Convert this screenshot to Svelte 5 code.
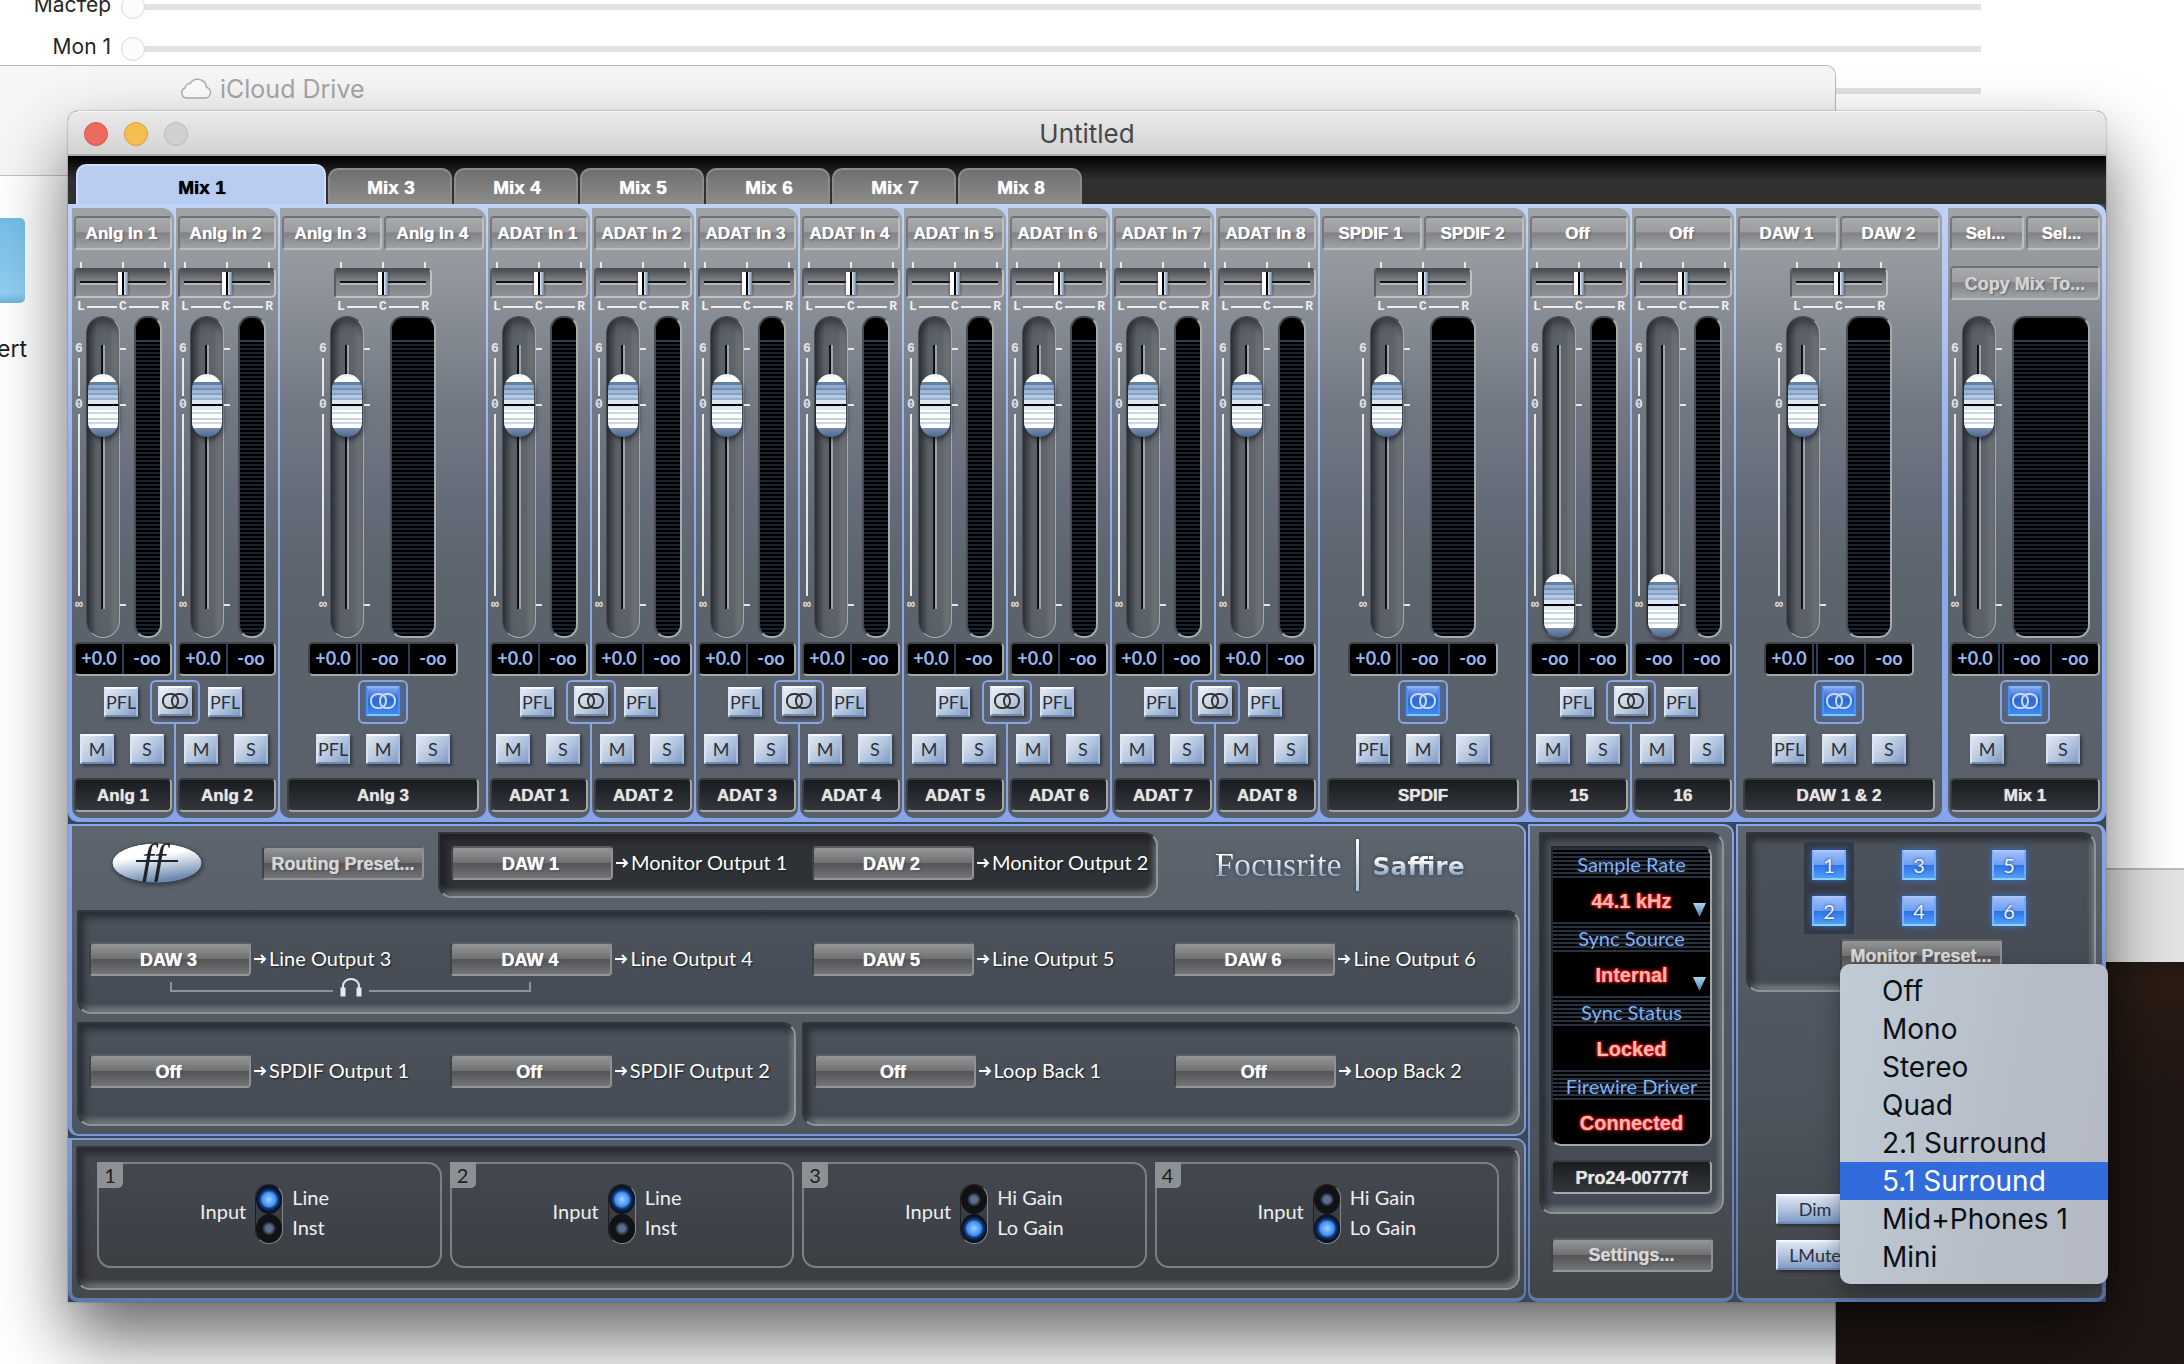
<script>
  const tabs = ["Mix 1", "Mix 3", "Mix 4", "Mix 5", "Mix 6", "Mix 7", "Mix 8"];

  // `link` marks the left strip of a linkable pair, `wide` a linked stereo strip
  const strips = [
    { inputs: ["Anlg In 1"], name: "Anlg 1", link: true },
    { inputs: ["Anlg In 2"], name: "Anlg 2" },
    { inputs: ["Anlg In 3", "Anlg In 4"], name: "Anlg 3", wide: true },
    { inputs: ["ADAT In 1"], name: "ADAT 1", link: true },
    { inputs: ["ADAT In 2"], name: "ADAT 2" },
    { inputs: ["ADAT In 3"], name: "ADAT 3", link: true },
    { inputs: ["ADAT In 4"], name: "ADAT 4" },
    { inputs: ["ADAT In 5"], name: "ADAT 5", link: true },
    { inputs: ["ADAT In 6"], name: "ADAT 6" },
    { inputs: ["ADAT In 7"], name: "ADAT 7", link: true },
    { inputs: ["ADAT In 8"], name: "ADAT 8" },
    { inputs: ["SPDIF 1", "SPDIF 2"], name: "SPDIF", wide: true },
    { inputs: ["Off"], name: "15", link: true, down: true },
    { inputs: ["Off"], name: "16", down: true },
    { inputs: ["DAW 1", "DAW 2"], name: "DAW 1 & 2", wide: true },
    { inputs: ["Sel...", "Sel..."], name: "Mix 1", wide: true, master: true },
  ];

  const monitorRoutes = [["DAW 1", "Monitor Output 1"], ["DAW 2", "Monitor Output 2"]];
  const lineRoutes = [
    ["DAW 3", "Line Output 3"],
    ["DAW 4", "Line Output 4"],
    ["DAW 5", "Line Output 5"],
    ["DAW 6", "Line Output 6"],
  ];
  const spdifRoutes = [["Off", "SPDIF Output 1"], ["Off", "SPDIF Output 2"]];
  const loopRoutes = [["Off", "Loop Back 1"], ["Off", "Loop Back 2"]];

  const inputs = [
    { options: ["Line", "Inst"], value: "Line" },
    { options: ["Line", "Inst"], value: "Line" },
    { options: ["Hi Gain", "Lo Gain"], value: "Lo Gain" },
    { options: ["Hi Gain", "Lo Gain"], value: "Lo Gain" },
  ];

  const monitorPairs = [[1, 2], [3, 4], [5, 6]];
  const presets = ["Off", "Mono", "Stereo", "Quad", "2.1 Surround", "5.1 Surround", "Mid+Phones 1", "Mini"];

  let activeTab = $state("Mix 1");
  let highlighted = $state("5.1 Surround");
</script>

{#snippet linkButton(on)}
  <span class="link-frame">
    <button class="key link-key" class:lit={on} aria-label="Stereo link" aria-pressed={on}>
      <svg width="28" height="18" viewBox="0 0 28 18" fill="none" stroke="currentColor" stroke-width="2">
        <rect x="2" y="2" width="15" height="14" rx="6.500" />
        <rect x="11" y="2" width="15" height="14" rx="6.500" />
      </svg>
    </button>
  </span>
{/snippet}

{#snippet route(source, target)}
  <div class="route">
    <button class="metal dark">{source}</button>
    <svg width="13" height="12" viewBox="0 0 13 12" fill="none" stroke="#fff" stroke-width="2">
      <path d="M0 6h11M7 2l4 4-4 4" />
    </svg>
    <span>{target}</span>
  </div>
{/snippet}

<div class="desktop">
  <section class="back-window">
    {#each ["Мастер", "Mon 1", "Mon 2"] as label, i}
      <div class="volume-row">
        <label for="volume-{i}">{label}</label>
        <input id="volume-{i}" type="range" min="0" max="100" value="0" />
      </div>
    {/each}
    <div class="back-footer"></div>
  </section>

  <section class="finder">
    <header>
      <svg width="32" height="24" viewBox="0 0 32 24" fill="#fdfdfd" stroke="#b0b0b0" stroke-width="1.5">
        <path d="M7 22h18a5.500 5.500 0 0 0 1.500-10.800A9 9 0 0 0 10 7.500 5 5 0 0 0 5 12 5.200 5.200 0 0 0 7 22z" />
      </svg>
      <span>iCloud Drive</span>
    </header>
    <div class="folder"></div>
    <p>ert</p>
  </section>

  <main class="window">
    <header class="titlebar">
      <div class="lights">
        <button class="close" aria-label="Close"></button>
        <button class="minimise" aria-label="Minimise"></button>
        <button class="zoom" aria-label="Zoom"></button>
      </div>
      <h1>Untitled</h1>
    </header>

    <nav class="tabs">
      {#each tabs as tab}
        <button class:active={tab === activeTab} onclick={() => (activeTab = tab)}>{tab}</button>
      {/each}
    </nav>

    <section class="mixer">
      {#each strips as strip}
        <article class="strip" class:wide={strip.wide} class:master={strip.master}>
          <div class="inputs">
            {#each strip.inputs as input}
              <button class="metal">{input}</button>
            {/each}
          </div>

          <div class="pan-area">
            {#if strip.master}
              <button class="metal copy">Copy Mix To...</button>
            {:else}
              <div class="pan-ticks"><i></i><i></i><i></i></div>
              <input class="pan" type="range" min="-50" max="50" value="0" aria-label="{strip.name} pan" />
              <div class="pan-scale"><b>L</b><i></i><b>C</b><i></i><b>R</b></div>
            {/if}
          </div>

          <div class="level">
            <div class="scale">
              <b>6</b><i class="short"></i><b>0</b><i class="long"></i><b>∞</b>
            </div>
            <input
              class="fader"
              type="range"
              min="0"
              max="100"
              value={strip.down ? 0 : 78}
              aria-label="{strip.name} level"
            />
            <div class="ticks"><i></i><i></i><i></i></div>
            <div class="meter" role="meter" aria-label="{strip.name} meter" aria-valuenow="0"></div>
          </div>

          <div class="readout">
            <span>{strip.down ? "-oo" : "+0.0"}</span>
            <span>-oo</span>
            {#if strip.wide}<span>-oo</span>{/if}
          </div>

          <div class="link-row">
            {#if strip.wide}
              {@render linkButton(true)}
            {:else}
              <button class="key">PFL</button>
              {#if strip.link}
                {@render linkButton(false)}
              {/if}
            {/if}
          </div>

          <div class="keys">
            {#if strip.wide && !strip.master}<button class="key">PFL</button>{/if}
            <button class="key">M</button>
            <button class="key">S</button>
          </div>

          <div class="name">{strip.name}</div>
        </article>
      {/each}
    </section>

    <div class="lower">
      <div class="left">
        <section class="panel routing">
          <div class="routing-top">
            <div class="presets">
              <svg class="logo" width="92" height="42" viewBox="0 0 92 42">
                <defs>
                  <linearGradient id="oval" x1="0" y1="0" x2="0.3" y2="1">
                    <stop offset="0.4" stop-color="#fff" />
                    <stop offset="1" stop-color="#6d8bb0" />
                  </linearGradient>
                </defs>
                <ellipse cx="46" cy="21" rx="45" ry="20" fill="url(#oval)" stroke="#39414b" />
                <text x="31" y="31" font-family="Liberation Serif, serif" font-style="italic" font-size="42" fill="#1d242c">ff</text>
                <path d="M25 19h42" stroke="#1d242c" stroke-width="2" />
              </svg>
              <button class="metal dark dim-text">Routing Preset...</button>
            </div>
            <div class="well deep pair">
              {#each monitorRoutes as [source, target]}
                {@render route(source, target)}
              {/each}
            </div>
            <div class="brand">
              <span class="focusrite">Focusrite</span>
              <i></i>
              <span class="saffire">Saffire</span>
            </div>
          </div>

          <div class="well quad">
            {#each lineRoutes as [source, target]}
              {@render route(source, target)}
            {/each}
            <div class="phones">
              <i class="from"></i>
              <svg width="24" height="20" viewBox="0 0 24 20" fill="none" stroke="#e3e8f3" stroke-width="2">
                <path d="M4 14V8a8 7 0 0 1 16 0v6" />
                <path d="M4 9.500v9M20 9.500v9" stroke-width="5" />
              </svg>
              <i class="to"></i>
            </div>
          </div>

          <div class="split">
            <div class="well pair">
              {#each spdifRoutes as [source, target]}
                {@render route(source, target)}
              {/each}
            </div>
            <div class="well pair">
              {#each loopRoutes as [source, target]}
                {@render route(source, target)}
              {/each}
            </div>
          </div>
        </section>

        <section class="panel hardware">
          <div class="well cards">
            {#each inputs as input, i}
              <div class="card" role="radiogroup" aria-labelledby="input-{i}">
                <span class="badge">{i + 1}</span>
                <span id="input-{i}" class="card-label">Input</span>
                <div class="capsule">
                  {#each input.options as option}
                    <input
                      type="radio"
                      id="input-{i}-{option}"
                      name="input-{i}"
                      value={option}
                      checked={option === input.value}
                    />
                  {/each}
                </div>
                <div class="options">
                  {#each input.options as option}
                    <label for="input-{i}-{option}">{option}</label>
                  {/each}
                </div>
              </div>
            {/each}
          </div>
        </section>
      </div>

      <section class="panel status">
        <div class="well device">
          <div class="lcd">
            <label for="rate">Sample Rate</label>
            <div class="value">
              <select id="rate"><option>44.1 kHz</option></select>
              <span class="arrow"></span>
            </div>
            <label for="sync">Sync Source</label>
            <div class="value">
              <select id="sync"><option>Internal</option></select>
              <span class="arrow"></span>
            </div>
            <h2>Sync Status</h2>
            <div class="value">Locked</div>
            <h2>Firewire Driver</h2>
            <div class="value">Connected</div>
          </div>
          <div class="name">Pro24-00777f</div>
        </div>
        <button class="metal dark dim-text">Settings...</button>
      </section>

      <section class="panel monitor">
        <div class="well">
          <div class="speakers">
            {#each monitorPairs as pair, i}
              <div class:selected={i === 0}>
                {#each pair as n}
                  <button>{n}</button>
                {/each}
              </div>
            {/each}
          </div>
          <div class="preset-anchor">
            <button class="metal dark dim-text" aria-haspopup="menu" aria-expanded="true">Monitor Preset...</button>
            <div class="menu" role="menu">
              {#each presets as preset}
                <button
                  role="menuitem"
                  class:highlighted={preset === highlighted}
                  onmouseenter={() => (highlighted = preset)}>{preset}</button
                >
              {/each}
            </div>
          </div>
        </div>
        <div class="mutes">
          <button class="key">Dim</button>
          <button class="key">LMute</button>
        </div>
      </section>
    </div>
  </main>
</div>

<style>
  :global(body) {
    margin: 0;
  }

  .desktop {
    --bold: "Liberation Sans", Arial, sans-serif;
    --light: Lato, "Open Sans", sans-serif;
    --system: Inter, Roboto, sans-serif;
    position: relative;
    box-sizing: border-box;
    min-height: 100vh;
    padding: 111px 78px 62px 68px;
    overflow: hidden;
    background: linear-gradient(#211715 70%, #2b1c14 72%, #211715 80%);
    font-family: var(--bold);
  }

  .desktop * {
    box-sizing: border-box;
  }

  button,
  input,
  select {
    margin: 0;
    padding: 0;
    border: 0;
    font: inherit;
  }

  /* Windows behind the mixer */

  .back-window {
    position: absolute;
    inset: 0 0 auto 0;
    height: 962px;
    display: flex;
    flex-direction: column;
    overflow: hidden;
    background: #fff;
    font-family: var(--system);
  }

  .volume-row {
    display: flex;
    align-items: center;
    gap: 10px;
    height: 42px;
    margin-right: 203px;
    flex-shrink: 0;
  }

  .volume-row:first-child {
    margin-top: -14px;
  }

  .volume-row label {
    width: 111px;
    padding-bottom: 5px;
    text-align: right;
    font-size: 21px;
    color: #262626;
  }

  .volume-row input {
    flex: 1;
    height: 24px;
    appearance: none;
    background: linear-gradient(#e2e2e2, #e2e2e2) center / 100% 6px no-repeat;
  }

  .volume-row input::-webkit-slider-thumb {
    appearance: none;
    width: 24px;
    height: 24px;
    border: 1px solid #d8d8d8;
    border-radius: 50%;
    background: #fcfcfc;
  }

  .back-footer {
    height: 94px;
    margin-top: auto;
    border-top: 2px solid #bcbcbc;
    background: #e4e4e4;
  }

  .finder {
    position: absolute;
    top: 65px;
    right: 348px;
    bottom: 0;
    left: 0;
    border: solid #b9b9b9;
    border-width: 1px 1px 0 0;
    border-radius: 0 10px 0 0;
    background: #fff;
    font-family: var(--system);
  }

  .finder header {
    display: flex;
    gap: 8px;
    height: 110px;
    padding: 8px 0 0 180px;
    border-bottom: 1px solid #c4c4c4;
    border-radius: 0 10px 0 0;
    background: #f6f6f6;
    color: #a6a6a6;
    font-size: 25px;
    line-height: 30px;
  }

  .finder header svg {
    margin-top: 2px;
  }

  .folder {
    width: 25px;
    height: 85px;
    margin-top: 42px;
    border-radius: 0 5px 5px 0;
    background: linear-gradient(#76bfe8, #8fd0f2 88%, #6fb4dc);
  }

  .finder p {
    margin: 31px 0 0 -3px;
    color: #1c1c1c;
    font-size: 23px;
    line-height: 30px;
  }

  /* Mixer window */

  .window {
    position: relative;
    border-radius: 10px 10px 0 0;
    background: #39465c;
    box-shadow:
      0 0 2px rgba(0, 0, 0, 0.4),
      0 36px 70px rgba(0, 0, 0, 0.6);
  }

  .titlebar {
    display: grid;
    grid-template-columns: 1fr auto 1fr;
    align-items: center;
    height: 45px;
    padding: 2px 16px 0;
    border-top: 1px solid #f6f6f6;
    border-bottom: 2px solid #a9a9a9;
    border-radius: 10px 10px 0 0;
    background: linear-gradient(#eaeaea, #d3d3d3);
  }

  .titlebar h1 {
    margin: 0;
    color: #484848;
    font: 400 26px/30px var(--system);
  }

  .lights {
    display: flex;
    gap: 16px;
  }

  .lights button {
    width: 24px;
    height: 24px;
    border: 1px solid #b9b9b9;
    border-radius: 50%;
    background: #d0d0d0;
  }

  .lights .close {
    border-color: #d8564b;
    background: #ed6a5e;
  }

  .lights .minimise {
    border-color: #dba03a;
    background: #f5bf4f;
  }

  .tabs {
    display: flex;
    align-items: flex-end;
    gap: 2px;
    height: 48px;
    padding: 0 8px;
    background: linear-gradient(#000, #303030 24px);
  }

  .tabs button {
    width: 124px;
    height: 36px;
    padding: 2px 0 0 2px;
    border: 2px solid #8d8d8d;
    border-bottom: 0;
    border-radius: 10px 10px 0 0;
    background: linear-gradient(#6f6f6f, #8c8c8c);
    color: #fff;
    font-size: 19px;
    font-weight: 700;
    text-shadow: 0 0 1px currentColor;
  }

  .tabs button.active {
    width: 250px;
    height: 40px;
    padding-top: 6px;
    border-color: #cfdcfa;
    background: #b9ccf1;
    color: #000;
  }

  .mixer {
    display: grid;
    grid-template-columns:
      repeat(2, minmax(0, 104fr)) minmax(0, 208fr) repeat(8, minmax(0, 104fr)) minmax(0, 208fr)
      repeat(2, minmax(0, 104fr)) minmax(0, 212fr) minmax(0, 154fr);
    padding: 4px;
    border-radius: 0 10px 10px 10px;
    background: linear-gradient(#c1d2f7, #8caaea 50%, #86a5e8);
  }

  .strip {
    display: flex;
    flex-direction: column;
    align-items: center;
    margin-right: 2px;
    padding: 8px 2px 6px;
    border-radius: 0 12px 10px 10px;
    background: linear-gradient(#9fa4a8, #90959b 12%, #737984 32%, #656c79 48%, #5b636d 62%, #596069);
  }

  .strip:nth-last-child(2) {
    margin-right: 6px;
  }

  .strip:last-child {
    margin-right: 0;
  }

  .metal {
    height: 34px;
    padding: 2px 3px 0 0;
    border: 2px solid;
    border-color: #6d7074 #bcbfc2 #bcbfc2 #74777b;
    border-radius: 4px;
    background: linear-gradient(#a8aaac, #9b9da0 46%, #808286 50%, #a0a2a5);
    color: #fff;
    font-size: 17px;
    font-weight: 700;
    white-space: nowrap;
    text-shadow:
      0 0 1px currentColor,
      1px 1px 2px rgba(60, 60, 60, 0.7);
  }

  .metal.dark {
    width: 162px;
    border-color: #5b5d60 #8f9193 #95979a #404346;
    background: linear-gradient(#939597, #707274 48%, #525456 52%, #737577);
    font-size: 18px;
  }

  .metal.dim-text {
    padding-right: 0;
    color: #d6d6d6;
  }

  .inputs {
    display: flex;
    gap: 2px;
    width: 100%;
  }

  .inputs .metal {
    flex: 1;
    min-width: 0;
  }

  .pan-area {
    display: flex;
    flex-direction: column;
    align-items: center;
    width: 98px;
    height: 66px;
    padding-top: 12px;
  }

  .master .pan-area {
    width: 100%;
    padding-top: 16px;
  }

  .metal.copy {
    width: 100%;
    padding-right: 0;
    color: #d2d3d4;
    font-size: 18px;
  }

  .pan-ticks {
    display: flex;
    justify-content: space-between;
    width: 86px;
    height: 6px;
  }

  .pan-ticks i {
    width: 2px;
    background: #e6e8ea;
  }

  .pan {
    width: 98px;
    height: 30px;
    appearance: none;
    border: 2px solid;
    border-color: #4b4f54 #bfc2c5 #bfc2c5 #5a5e63;
    border-radius: 3px 5px 5px 3px;
    background:
      linear-gradient(#101214 50%, #b5b7b9 50%) center / 86px 4px no-repeat,
      linear-gradient(#4d5156, #7d8186 40%, #8e9296);
  }

  .pan::-webkit-slider-thumb {
    appearance: none;
    width: 10px;
    height: 23px;
    background: linear-gradient(90deg, #fff 4px, #000 4px 6px, #dfe8f4 6px, #6887b0);
    box-shadow: 0 0 3px #33373b;
  }

  .pan-scale {
    display: flex;
    align-items: center;
    justify-content: space-between;
    width: 92px;
    height: 18px;
    color: #eceeef;
    font: 700 13px/18px "Liberation Mono", monospace;
  }

  .pan-scale i {
    width: 30px;
    height: 2px;
    background: currentColor;
  }

  .level {
    display: flex;
    height: 322px;
    margin-right: 10px;
    color: #e4e6e8;
  }

  .wide:not(.master) .level {
    margin-right: 12px;
  }

  .scale {
    display: flex;
    flex-direction: column;
    align-items: center;
    gap: 2px;
    width: 10px;
    margin-right: 2px;
    padding-top: 26px;
    font: 700 13px/14px "Liberation Mono", monospace;
  }

  .scale i {
    width: 2px;
    background: currentColor;
  }

  .scale .short {
    height: 38px;
  }

  .scale .long {
    height: 182px;
  }

  .fader {
    width: 34px;
    height: 322px;
    appearance: none;
    writing-mode: vertical-lr;
    direction: rtl;
    border: 1px solid;
    border-color: #4a4e54 #a5a9ad #aaadb0 #4a4e54;
    border-radius: 17px;
    background:
      linear-gradient(90deg, #0d0f10 50%, #a0a4a8 50%) center 28px / 4px 264px no-repeat,
      linear-gradient(90deg, #33373b, #5b6067 30%, #5d636b 70%, #83878c);
    box-shadow: inset 0 6px 8px rgba(30, 32, 36, 0.6);
  }

  .fader::-webkit-slider-thumb {
    appearance: none;
    width: 30px;
    height: 63px;
    border-radius: 15px;
    background: linear-gradient(
      #e6e9ee,
      #fff 4px 8px,
      #5f7fa8 8px 11px,
      #93abcb 11px 14px,
      #7390b8 14px 16px,
      #a3b7d5 16px 19px,
      #86a0c6 19px 21px,
      #b5c8e2 21px 24px,
      #98b0d0 24px 26px,
      #dce7f5 26px 30px,
      #000 30px 32px,
      #dfe8f6 32px 36px,
      #fff 36px 38px,
      #cbd8e2 38px 40px,
      #fff 40px 44px,
      #c6d4df 44px 46px,
      #fff 46px 48px,
      #ccd9e3 48px 50px,
      #fff 50px 54px,
      #7890b2 54px,
      #4b6890
    );
    box-shadow: 1px 3px 5px rgba(20, 22, 26, 0.7);
  }

  .ticks {
    width: 8px;
    padding-top: 32px;
  }

  .ticks i {
    display: block;
    width: 6px;
    height: 2px;
    margin-bottom: 54px;
    background: currentColor;
  }

  .ticks i:nth-child(2) {
    margin-bottom: 198px;
  }

  .meter {
    width: 28px;
    margin-left: 6px;
    border: 2px solid;
    border-color: #3d4147 #a7abaf #a7abaf #4a4e54;
    border-radius: 13px;
    background:
      linear-gradient(#000, #000) 0 0 / 100% 22px no-repeat,
      linear-gradient(#2c4058, #2c4058) 0 22px / 100% 2px no-repeat,
      repeating-linear-gradient(#000 0 2px, #18232f 2px 4px);
  }

  .wide .meter {
    width: 46px;
    margin-left: 18px;
  }

  .master .meter {
    width: 78px;
    margin-left: 8px;
  }

  .readout {
    display: flex;
    width: 98px;
    height: 34px;
    margin-top: 4px;
    border: 2px solid;
    border-color: #3f444b #a3a7ab #a3a7ab #3f444b;
    border-radius: 5px;
    background: #000;
    color: #98b6ee;
    font: 700 18px/28px var(--light);
  }

  .readout span {
    flex: 1;
    text-align: center;
  }

  .readout span + span {
    border-left: 2px solid #2c3d58;
  }

  .wide .readout {
    width: 150px;
  }

  .wide .readout span:nth-child(2) {
    border-left: 6px double #2c3d58;
  }

  .key {
    width: 34px;
    height: 30px;
    border: 2px solid;
    border-color: #f4f8fc #a9bedb #6d89b2 #dbe5f1;
    background: linear-gradient(135deg, #e2eaf4, #b3c5de 55%, #829dc6);
    box-shadow: 2px 2px 3px rgba(25, 28, 33, 0.6);
    color: #2b333d;
    font: 400 18px/24px var(--light);
    text-align: center;
  }

  .link-row {
    position: relative;
    display: flex;
    align-items: center;
    justify-content: center;
    width: 98px;
    height: 44px;
    margin-top: 4px;
  }

  .strip:not(.wide) .link-row {
    padding-right: 4px;
  }

  .link-frame {
    display: flex;
    align-items: center;
    justify-content: center;
    width: 50px;
    height: 44px;
    padding-bottom: 2px;
    border: 2px solid #86a5e6;
    border-radius: 6px;
    background: #5b636d;
  }

  /* The link key of an unlinked pair straddles the line between both strips */
  .strip:not(.wide) .link-frame {
    position: absolute;
    top: 0;
    right: -28px;
    z-index: 1;
  }

  .link-key {
    display: flex;
    align-items: center;
    justify-content: center;
    background: linear-gradient(135deg, #eef1f5, #c4cedb 55%, #8ea5c8);
  }

  .link-key.lit {
    border-color: #8cb2f7 #4f8ff0 #7cc6fb #4f8ff0;
    background: linear-gradient(#7ba4f2, #2f66cf 45%, #3f8af2);
    box-shadow: 0 0 6px #3377dd;
    color: #c9dcff;
  }

  .keys {
    display: flex;
    gap: 16px;
    margin-top: 10px;
  }

  .strip:not(.wide) .keys {
    margin-right: 2px;
  }

  .master .keys {
    gap: 42px;
  }

  .name {
    width: 98px;
    height: 34px;
    margin-top: 14px;
    border: 2px solid;
    border-color: #3a3e43 #a3a6a9 #a3a6a9 #3a3e43;
    border-radius: 5px;
    background: linear-gradient(#191c20, #33373c);
    color: #e4e4e4;
    font-size: 17px;
    font-weight: 700;
    line-height: 32px;
    text-align: center;
    text-shadow: 0 0 1px currentColor;
  }

  .wide .name {
    width: calc(100% - 10px);
  }

  .master .name {
    width: 100%;
  }

  /* Lower half */

  .lower {
    display: grid;
    grid-template-columns: minmax(0, 1458fr) minmax(0, 206fr) minmax(0, 370fr);
    gap: 2px;
    margin-top: 2px;
  }

  .left {
    display: flex;
    flex-direction: column;
    gap: 2px;
  }

  .panel {
    border: 2px solid transparent;
    border-radius: 0 10px 10px 10px;
    background:
      linear-gradient(#5d656f, #4f5761 40%, #4c545d 60%, #414548) padding-box,
      linear-gradient(#88a6e8, #5f79a9) border-box;
  }

  .well {
    border: 2px solid;
    border-color: #33373c #919599 #909497 #33373c;
    border-radius: 2px 14px 14px 14px;
    background: linear-gradient(#4c535d, #454b55);
    box-shadow:
      inset 5px 6px 7px rgba(20, 22, 26, 0.6),
      inset -3px -5px 5px rgba(160, 165, 170, 0.5);
  }

  .well.deep {
    background: #2e3136;
  }

  .routing {
    padding: 0 4px 8px 5px;
    border-left-width: 4px;
    background:
      linear-gradient(#5d656f, #4d555f) padding-box,
      linear-gradient(#88a6e8, #7a97d3) border-box;
  }

  .routing-top {
    display: grid;
    grid-template-columns: minmax(0, 361fr) minmax(0, 720fr) minmax(0, 362fr);
    padding: 6px 0 12px;
  }

  .routing-top .well {
    height: 66px;
    padding: 12px 0 0 11px;
  }

  .presets {
    display: flex;
    justify-content: space-between;
    padding: 10px 14px 0 34px;
  }

  .presets .metal {
    margin-top: 4px;
  }

  .logo {
    filter: drop-shadow(1px 2px 2px rgba(20, 22, 26, 0.5));
  }

  .brand {
    display: flex;
    align-items: center;
    gap: 14px;
    padding: 0 0 0 57px;
    height: 66px;
  }

  .brand span {
    background: linear-gradient(#fff 35%, #8fa9c6 75%);
    background-clip: text;
    color: transparent;
  }

  .brand i {
    width: 3px;
    height: 52px;
    background: linear-gradient(#fff, #a9bccf);
    box-shadow: 0 0 3px #333a43;
  }

  .focusrite {
    font: 400 34px/40px "Liberation Serif", serif;
    filter: drop-shadow(0 0 2px #333a43);
  }

  .saffire {
    padding-top: 4px;
    font: 700 25px/32px "DejaVu Sans", sans-serif;
    filter: drop-shadow(0 0 2px #333a43);
  }

  .pair,
  .quad {
    display: grid;
    align-content: start;
    height: 104px;
    padding: 30px 0 0 10px;
  }

  .pair {
    grid-template-columns: minmax(0, 362fr) minmax(0, 345fr);
  }

  .quad {
    grid-template-columns: repeat(3, minmax(0, 362fr)) minmax(0, 345fr);
  }

  .split {
    display: grid;
    grid-template-columns: 1fr 1fr;
    gap: 6px;
    margin-top: 8px;
  }

  .route {
    display: flex;
    align-items: center;
    gap: 2px;
    height: 34px;
    color: #fff;
    font: 400 20px/32px var(--light);
    white-space: nowrap;
    text-shadow: 1px 1px 2px #15181c;
  }

  .route span {
    padding-bottom: 2px;
  }

  .route .metal {
    flex-shrink: 0;
    margin-right: 1px;
    font-family: var(--bold);
    font-weight: 700;
    line-height: 24px;
  }

  .phones {
    display: flex;
    grid-column: 1 / 3;
    gap: 6px;
    margin: 2px 281px 0 81px;
  }

  .phones i {
    flex: 1;
    height: 10px;
    margin-top: 4px;
    border: 0 solid #8d9299;
    border-bottom-width: 2px;
  }

  .phones .from {
    border-left-width: 2px;
  }

  .phones .to {
    border-right-width: 2px;
  }

  .hardware {
    padding: 6px 4px 8px;
    border-width: 2px 2px 4px 4px;
    background:
      linear-gradient(#535a64, #43484c) padding-box,
      linear-gradient(#7f9cda, #5f79a9) border-box;
  }

  .cards {
    display: grid;
    grid-template-columns: repeat(4, 1fr);
    gap: 8px;
    padding: 14px 19px 20px;
    background: linear-gradient(#444952, #3a3d41);
  }

  .card {
    position: relative;
    display: grid;
    grid-template-columns: 1fr 28px 1fr;
    align-items: center;
    gap: 9px;
    height: 106px;
    padding-bottom: 2px;
    border: 2px solid #7d8083;
    border-radius: 0 14px 14px 14px;
    color: #eee;
    font: 400 20px/30px var(--light);
  }

  .badge {
    position: absolute;
    top: -2px;
    left: -2px;
    width: 26px;
    height: 26px;
    border-radius: 0 0 5px 0;
    background: #8e9194;
    color: #1b1d20;
    line-height: 26px;
    text-align: center;
  }

  .card-label {
    padding-bottom: 6px;
    text-align: right;
  }

  .capsule {
    display: flex;
    flex-direction: column;
    border: 1px solid;
    border-color: #1d2023 #85888b #85888b #1d2023;
    border-radius: 14px;
    background: #3a3d42;
  }

  .capsule input {
    width: 26px;
    height: 29px;
    appearance: none;
    border-radius: 50%;
    background: radial-gradient(circle, #5c7190 3px, #24303f 6px, #101214 7px);
  }

  .capsule input:checked {
    background: radial-gradient(circle, #9fd2ff, #3f8df5 7px, #123a80 9px, #0a1424 12px);
  }

  .options {
    display: flex;
    flex-direction: column;
    padding-bottom: 4px;
  }

  .status {
    display: flex;
    flex-direction: column;
    align-items: center;
    padding: 6px 8px 0 9px;
    border-bottom-width: 4px;
  }

  .device {
    width: 100%;
    padding: 12px 10px 18px;
  }

  .device .name {
    width: 100%;
    font-size: 18px;
  }

  .lcd {
    height: 300px;
    padding-bottom: 2px;
    border: 2px solid;
    border-color: #24282d #a3a6a9 #a3a6a9 #24282d;
    border-radius: 0 10px 10px 10px;
    overflow: hidden;
    background: #000;
    color: #7fb1fa;
    text-align: center;
  }

  .lcd label,
  .lcd h2 {
    display: block;
    height: 30px;
    margin: 0;
    background: repeating-linear-gradient(#26323f 0 2px, #000 2px 4px);
    font: 400 20px/32px var(--light);
  }

  .lcd .value {
    position: relative;
    height: 44px;
    color: #ffb9b0;
    font-size: 20px;
    font-weight: 700;
    line-height: 46px;
    text-shadow:
      0 0 2px #f22,
      0 0 3px #f22,
      0 0 4px #c11;
  }

  .lcd select {
    width: 100%;
    height: 46px;
    appearance: none;
    background: none;
    color: inherit;
    text-align: center;
    text-align-last: center;
    text-shadow: inherit;
  }

  .arrow {
    position: absolute;
    right: 4px;
    bottom: 5px;
    width: 13px;
    height: 14px;
    background: linear-gradient(#a8d4ef, #4b7fae);
    clip-path: polygon(0 0, 100% 0, 50% 100%);
    pointer-events: none;
  }

  .status > .metal {
    margin-top: 24px;
    padding-top: 0;
  }

  .monitor {
    display: flex;
    flex-direction: column;
    padding: 6px 6px 0 8px;
    border-width: 2px 4px 4px 2px;
  }

  .monitor .well {
    display: flex;
    flex-direction: column;
    align-items: center;
    gap: 5px;
    padding: 8px 0 17px;
  }

  .speakers {
    display: flex;
    gap: 40px;
    margin-right: 4px;
  }

  .speakers div {
    display: flex;
    flex-direction: column;
    align-items: center;
    gap: 16px;
    width: 50px;
    height: 92px;
    padding-top: 8px;
  }

  .speakers .selected {
    background: #343a43;
  }

  .speakers button {
    width: 34px;
    height: 30px;
    border: 2px solid;
    border-color: #a9c6fb #6ea8fa #8ad0ff #7fb0fa;
    background: linear-gradient(#9dbdf7, #6f9ff2 48%, #2f73e6 50%, #4f9ffb);
    box-shadow: 0 0 6px #3672d4;
    color: #eaf2ff;
    font: 400 20px/26px var(--light);
    text-shadow: 0 0 3px #1b3c78;
  }

  .preset-anchor {
    position: relative;
  }

  .preset-anchor > .metal {
    display: block;
    padding-top: 0;
  }

  .menu {
    position: absolute;
    top: 25px;
    left: 0;
    z-index: 2;
    width: 268px;
    padding: 8px 0;
    border-radius: 10px;
    background: linear-gradient(100deg, #bfccd5, #b7bdc7 60%, #b4b9c3);
    box-shadow:
      0 0 1px rgba(0, 0, 0, 0.5),
      0 10px 24px rgba(0, 0, 0, 0.35);
  }

  .menu button {
    display: block;
    width: 100%;
    height: 38px;
    padding: 0 0 0 42px;
    background: none;
    color: #0b0f16;
    font: 400 28px/38px var(--system);
    text-align: left;
  }

  .menu .highlighted {
    background: #326bdb;
    color: #fff;
  }

  .mutes {
    display: flex;
    flex-direction: column;
    gap: 16px;
    margin: auto 0 28px 30px;
  }

  .mutes .key {
    width: 78px;
    background: linear-gradient(#dfe8f4, #a9bddb 60%, #819dc6);
  }
</style>
